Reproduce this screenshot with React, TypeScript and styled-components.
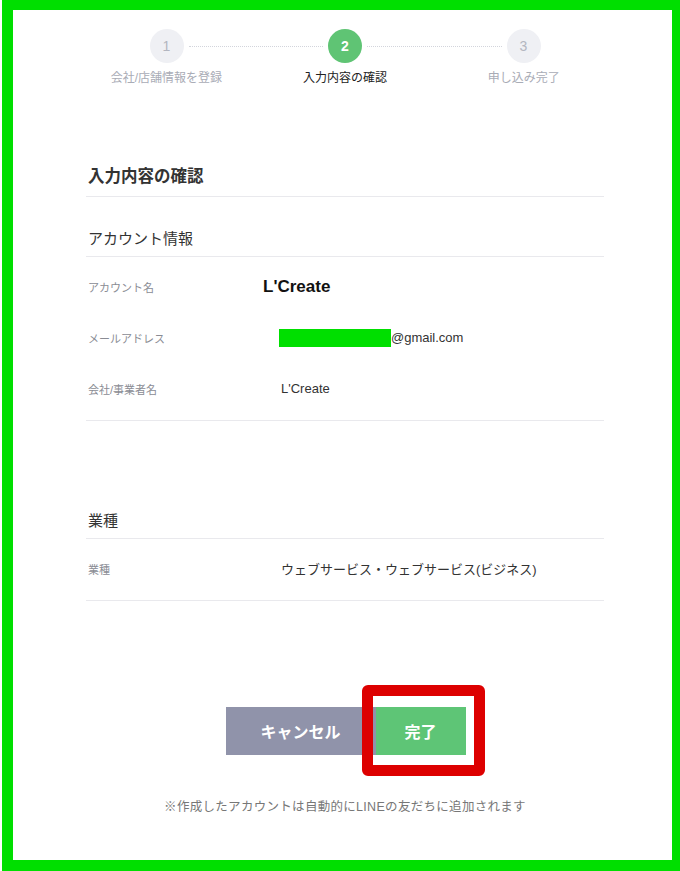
import React from 'react';
import styled, { createGlobalStyle } from 'styled-components';

const GlobalStyle = createGlobalStyle`
  html, body {
    margin: 0;
    padding: 0;
    background: #fff;
  }
  body {
    font-family: "Liberation Sans", "Noto Sans CJK JP", sans-serif;
    color: #333;
  }
`;

const Frame = styled.div`
  box-sizing: border-box;
  width: 678px;
  height: 871px;
  margin-left: 2px;
  border-style: solid;
  border-color: #00df00;
  border-width: 10px 8px 11px 11px;
  padding: 0 68px 0 73px;
  background: #fff;
`;

const Stepper = styled.div`
  margin: 0 -9px;
  padding-top: 19px;
`;

const DotsRow = styled.div`
  display: grid;
  grid-template-columns: 34px 1fr 34px 1fr 34px;
  align-items: center;
  width: 391px;
  margin: 0 auto;
`;

const Circle = styled.div<{ $active?: boolean }>`
  width: 34px;
  height: 34px;
  border-radius: 50%;
  display: flex;
  align-items: center;
  justify-content: center;
  font-size: 14px;
  font-weight: ${(p) => (p.$active ? 700 : 400)};
  background: ${(p) => (p.$active ? '#5fc474' : '#eff0f4')};
  color: ${(p) => (p.$active ? '#fff' : '#b3b6c0')};
`;

const Connector = styled.div`
  margin: 0 5px;
  border-top: 1px dotted #d3d5dc;
`;

const LabelsRow = styled.div`
  display: grid;
  grid-template-columns: repeat(3, 1fr);
  margin-top: 7px;
`;

const StepLabel = styled.div<{ $active?: boolean }>`
  text-align: center;
  font-size: 12px;
  line-height: 16px;
  color: ${(p) => (p.$active ? '#222' : '#a9acb6')};
`;

const PageTitle = styled.h1`
  margin: 78px 0 0;
  padding: 0 2px 8px;
  font-size: 16.5px;
  line-height: 24px;
  font-weight: 700;
  color: #333;
  border-bottom: 1px solid #e9e9ed;
`;

const SectionTitle = styled.h2<{ $gap: number }>`
  margin: ${(p) => p.$gap}px 0 0;
  padding: 0 2px 6px;
  font-size: 15px;
  line-height: 22px;
  font-weight: 400;
  color: #333;
  border-bottom: 1px solid #e9e9ed;
`;

const List = styled.div`
  padding: 4px 0 6px;
  border-bottom: 1px solid #e9e9ed;
`;

const Row = styled.div`
  display: grid;
  grid-template-columns: 195px 1fr;
  align-items: center;
  height: 51px;
`;

const Label = styled.div`
  padding-left: 2px;
  font-size: 11px;
  color: #8a8c94;
`;

const Value = styled.div<{ $strong?: boolean }>`
  display: flex;
  align-items: center;
  font-size: ${(p) => (p.$strong ? '17px' : '13px')};
  font-weight: ${(p) => (p.$strong ? 700 : 400)};
  color: ${(p) => (p.$strong ? '#111' : '#333')};
  margin-left: ${(p) => (p.$strong ? '-18px' : '0')};
`;

const Mask = styled.span`
  display: inline-block;
  width: 112px;
  height: 18px;
  margin-left: -2px;
  background: #00df00;
`;

const Actions = styled.div`
  position: relative;
  display: flex;
  justify-content: center;
  margin-top: 106px;
  padding-left: 1px;
`;

const Button = styled.button<{ $primary?: boolean }>`
  height: 48px;
  width: ${(p) => (p.$primary ? '90px' : '150px')};
  border: none;
  border-radius: 0;
  font-family: inherit;
  font-size: 16px;
  font-weight: 700;
  color: #fff;
  background: ${(p) => (p.$primary ? '#5ec576' : '#9093aa')};
  cursor: pointer;
`;

const Highlight = styled.div`
  position: absolute;
  left: 276px;
  top: -22px;
  width: 123px;
  height: 91px;
  box-sizing: border-box;
  border: 11px solid #dd0000;
  border-radius: 6px;
  pointer-events: none;
`;

const Note = styled.p`
  margin: 43px 0 0;
  text-align: center;
  font-size: 12.5px;
  letter-spacing: 0.3px;
  line-height: 18px;
  color: #777;
`;

const steps = ['会社/店舗情報を登録', '入力内容の確認', '申し込み完了'];

export default function App() {
  return (
    <>
      <GlobalStyle />
      <Frame>
        <Stepper>
          <DotsRow>
            <Circle>1</Circle>
            <Connector />
            <Circle $active>2</Circle>
            <Connector />
            <Circle>3</Circle>
          </DotsRow>
          <LabelsRow>
            {steps.map((s, i) => (
              <StepLabel key={s} $active={i === 1}>
                {s}
              </StepLabel>
            ))}
          </LabelsRow>
        </Stepper>

        <PageTitle>入力内容の確認</PageTitle>

        <SectionTitle $gap={31}>アカウント情報</SectionTitle>
        <List>
          <Row>
            <Label>アカウント名</Label>
            <Value $strong>L'Create</Value>
          </Row>
          <Row>
            <Label>メールアドレス</Label>
            <Value>
              <Mask />
              @gmail.com
            </Value>
          </Row>
          <Row>
            <Label>会社/事業者名</Label>
            <Value>L'Create</Value>
          </Row>
        </List>

        <SectionTitle $gap={89}>業種</SectionTitle>
        <List>
          <Row>
            <Label>業種</Label>
            <Value>ウェブサービス・ウェブサービス(ビジネス)</Value>
          </Row>
        </List>

        <Actions>
          <Button>キャンセル</Button>
          <Button $primary>完了</Button>
          <Highlight />
        </Actions>

        <Note>※作成したアカウントは自動的にLINEの友だちに追加されます</Note>
      </Frame>
    </>
  );
}
